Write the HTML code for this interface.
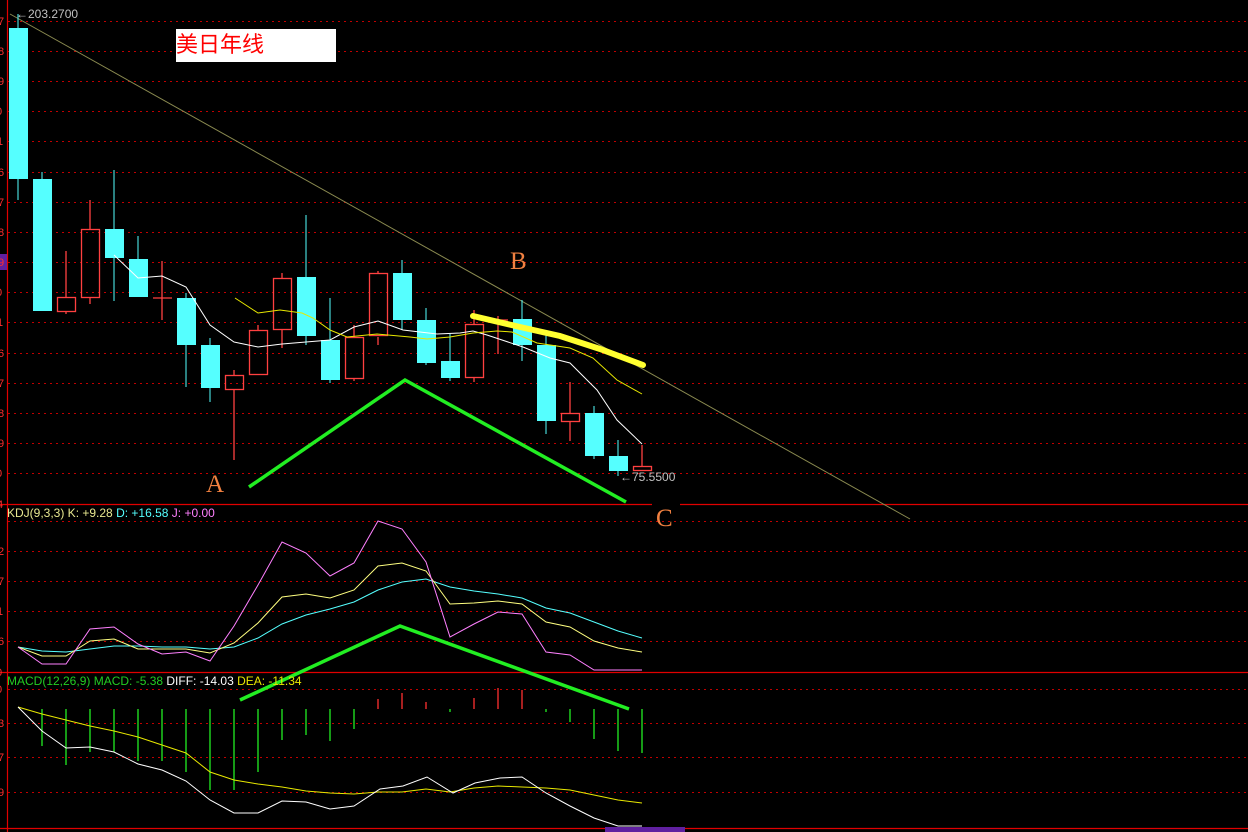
<!DOCTYPE html><html><head><meta charset="utf-8"><style>html,body{margin:0;padding:0;background:#000;width:1248px;height:832px;overflow:hidden}svg{display:block}</style></head><body>
<svg width="1248" height="832" xmlns="http://www.w3.org/2000/svg" font-family="Liberation Sans, sans-serif">
<rect width="1248" height="832" fill="#000"/>
<g stroke="#c00000" stroke-width="1" stroke-dasharray="2,4">
<path d="M8 21.5H1248M8 51.5H1248M8 81.5H1248M8 111.5H1248M8 141.5H1248M8 172.5H1248M8 202.5H1248M8 232.5H1248M8 262.5H1248M8 292.5H1248M8 322.5H1248M8 353.5H1248M8 383.5H1248M8 413.5H1248M8 443.5H1248M8 473.5H1248"/>
<path d="M8 521.5H1248M8 551.5H1248M8 581.5H1248M8 611.5H1248M8 641.5H1248"/>
<path d="M8 689.5H1248M8 723.5H1248M8 757.5H1248M8 792.5H1248"/>
</g>
<g stroke="#e00000" stroke-width="1.2">
<path d="M0 504.5H652M680 504.5H1248M0 672.5H1248M0 828.5H1248M7.5 0V832"/>
</g>
<rect x="605" y="827" width="80" height="5" fill="#6020a0"/>
<rect x="0" y="254" width="7" height="16" fill="#6020a0"/>
<g fill="#ff3030" font-size="11">
<text x="-2" y="25">7</text><text x="-2" y="55">8</text><text x="-2" y="85">9</text><text x="-4" y="115">0</text><text x="-3" y="145">1</text><text x="-2" y="176">6</text><text x="-2" y="206">7</text><text x="-2" y="236">8</text><text x="-2" y="266">9</text><text x="-4" y="296">0</text><text x="-3" y="326">1</text><text x="-2" y="357">6</text><text x="-2" y="387">7</text><text x="-2" y="417">8</text><text x="-2" y="447">9</text><text x="-4" y="477">0</text><text x="-3" y="508">4</text>
<text x="-2" y="555">2</text><text x="-2" y="585">7</text><text x="-3" y="615">1</text><text x="-2" y="645">6</text><text x="-4" y="676">0</text>
<text x="-4" y="693">0</text><text x="-2" y="727">3</text><text x="-2" y="761">7</text><text x="-2" y="796">9</text>
</g>
<path d="M10 14L910 519" stroke="#8a8a50" stroke-width="1"/>
<rect x="176" y="29" width="160" height="33" fill="#fff"/>
<text x="176" y="52" font-size="22" fill="#ff0000" font-family="Liberation Sans, Noto Sans CJK SC, sans-serif">美日年线</text>
<text x="16" y="18" font-size="12" fill="#c0c0c0">←203.2700</text>
<text x="620" y="481" font-size="12" fill="#c0c0c0">←75.5500</text>
<g stroke="#55ffff" stroke-width="1">
<path d="M18 14V200M42 172V311M114 170V301M138 236V297M186 293V387M210 338V402M306 215V345M330 298V383M402 260V330M426 308V365M450 334V381M522 300V361M546 330V434M594 406V459M618 440V476"/>
</g>
<g fill="#55ffff">
<rect x="9" y="28" width="19" height="151"/><rect x="33" y="179" width="19" height="132"/><rect x="105" y="229" width="19" height="29"/><rect x="129" y="259" width="19" height="38"/><rect x="177" y="298" width="19" height="47"/><rect x="201" y="345" width="19" height="43"/><rect x="297" y="277" width="19" height="59"/><rect x="321" y="340" width="19" height="40"/><rect x="393" y="273" width="19" height="47"/><rect x="417" y="320" width="19" height="43"/><rect x="441" y="361" width="19" height="17"/><rect x="513" y="319" width="19" height="26"/><rect x="537" y="345" width="19" height="76"/><rect x="585" y="413" width="19" height="43"/><rect x="609" y="456" width="19" height="15"/>
</g>
<g stroke="#ff4040" stroke-width="1.3" fill="none">
<path d="M66 251V297M66 311V314M90 200V229M90 297V304M162 261V320M153 298H172M234 370V375M234 389V460M258 325V330M282 273V278M282 329V348M354 325V337M354 378V381M378 271V273M378 337V345M474 310V324M474 377V382M498 316V354M489 320H508M570 382V413M570 421V441M642 445V466"/>
<rect x="57.5" y="297.5" width="18" height="14"/><rect x="81.5" y="229.5" width="18" height="68"/><rect x="225.5" y="375.5" width="18" height="14"/><rect x="249.5" y="330.5" width="18" height="44"/><rect x="273.5" y="278.5" width="18" height="51"/><rect x="345.5" y="337.5" width="18" height="41"/><rect x="369.5" y="273.5" width="18" height="62"/><rect x="465.5" y="324.5" width="18" height="53"/><rect x="561.5" y="413.5" width="18" height="8"/><rect x="633.5" y="466.5" width="18" height="4"/>
</g>
<polyline fill="none" stroke="#fff" stroke-width="1" points="114,255 138,278 150,277 162,276 186,287 210,325 234,342 258,347 282,344 306,342 330,340 354,327 378,321 403,330 437,334 460,333 473,331 487,335 523,347 550,358 570,363 597,390 617,420 642,444"/>
<polyline fill="none" stroke="#e8e800" stroke-width="1" points="235,298 258,313 280,310 302,313 313,318 330,330 347,337 377,334 410,337 427,339 450,337 473,333 497,331 512,332 537,343 570,348 593,358 617,380 642,394"/>
<polyline fill="none" stroke="#ffff30" stroke-width="6" stroke-linecap="round" points="473,316 520,327 560,336 600,349 643,365"/>
<polyline fill="none" stroke="#22ee22" stroke-width="3.5" points="249,487 405,380 626,502"/>
<g fill="#f08040" font-family="Liberation Serif, serif" font-size="25">
<text x="206" y="492">A</text><text x="510" y="269">B</text><text x="656" y="526">C</text>
</g>
<text x="7" y="517" font-size="12"><tspan fill="#e8e890">KDJ(9,3,3) K: +9.28 </tspan><tspan fill="#55ffff">D: +16.58 </tspan><tspan fill="#ff80ff">J: +0.00</tspan></text>
<polyline fill="none" stroke="#55ffff" stroke-width="1" points="18,647 42,651 66,652 90,649 114,646 138,646 162,647 186,647 210,649 234,647 258,638 282,624 306,615 330,609 354,602 378,590 402,582 426,579 450,587 474,591 498,594 522,598 546,608 570,613 594,622 618,631 642,638"/>
<polyline fill="none" stroke="#ffff80" stroke-width="1" points="18,647 42,656 66,656 90,641 114,639 138,649 162,649 186,649 210,653 234,643 258,623 282,597 306,594 330,598 354,590 378,566 402,563 426,571 450,604 474,603 498,601 522,604 546,622 570,627 594,641 618,648 642,652"/>
<polyline fill="none" stroke="#ff80ff" stroke-width="1" points="18,647 42,664 66,664 90,629 114,627 138,644 162,654 186,652 210,661 234,626 258,585 282,542 306,553 330,576 354,563 378,521 402,529 426,562 450,637 474,624 498,612 522,614 546,652 570,655 594,670 618,670 642,670"/>
<polyline fill="none" stroke="#22ee22" stroke-width="3.5" points="240,700 400,626 629,709"/>
<text x="7" y="685" font-size="12"><tspan fill="#22cc22">MACD(12,26,9) MACD: -5.38 </tspan><tspan fill="#fff">DIFF: -14.03 </tspan><tspan fill="#e8e800">DEA: -11.34</tspan></text>
<g stroke="#22ee22" stroke-width="1.3">
<path d="M42 709V746M66 709V765M90 709V752M114 709V752M138 709V761M162 709V761M186 709V772M210 709V790M234 709V790M258 709V772M282 709V740M306 709V735M330 709V741M354 709V729M450 709V712M546 709V712M570 709V722M594 709V739M618 709V751M642 709V753"/>
</g>
<g stroke="#ff3030" stroke-width="1.3">
<path d="M378 709V699M402 709V693M426 709V702M474 709V698M498 709V688M522 709V690"/>
</g>
<polyline fill="none" stroke="#e8e800" stroke-width="1" points="18,707 42,714 66,720 90,726 114,731 138,737 162,745 186,753 210,772 234,780 258,784 282,787 306,791 330,793 354,794 378,792 402,792 426,789 450,792 474,788 498,786 522,787 546,788 570,790 594,795 618,800 642,803"/>
<polyline fill="none" stroke="#fff" stroke-width="1" points="18,707 42,731 66,748 90,747 114,752 138,764 162,770 186,781 210,800 234,813 258,813 282,801 306,802 330,809 354,806 380,789 403,786 427,777 453,793 475,783 500,778 522,777 546,793 570,806 594,818 618,826 642,826"/>
</svg>
</body></html>
